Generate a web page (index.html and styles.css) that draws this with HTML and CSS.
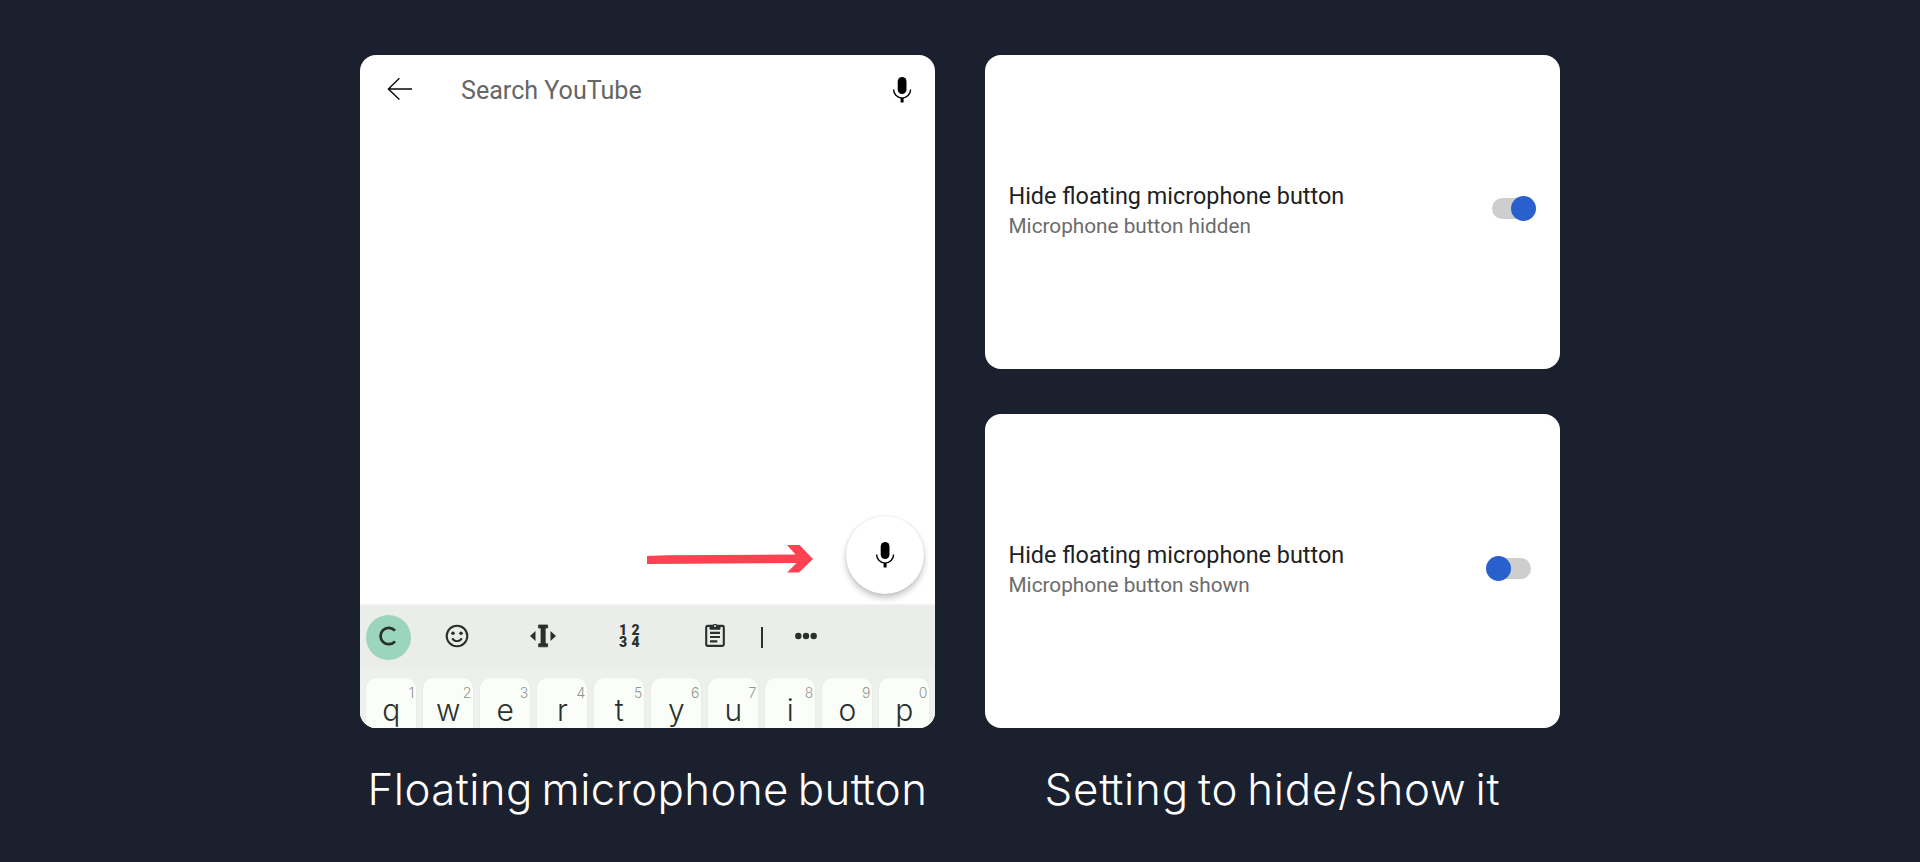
FILE: index.html
```html
<!DOCTYPE html>
<html lang="en">
<head>
<meta charset="utf-8">
<title>Hide floating microphone button</title>
<link rel="stylesheet" href="styles.css">
</head>
<body>
<svg class="defs" width="0" height="0">
  <symbol id="mic" viewBox="0 0 20 28">
    <rect x="5.7" y="1" width="8.8" height="17" rx="4.4" fill="#000"/>
    <path d="M1.6 13.6a8.5 8.5 0 0 0 17 0" fill="none" stroke="#000" stroke-width="1.4"/>
    <path d="M10.1 21.8v4.8" stroke="#000" stroke-width="3"/>
  </symbol>
</svg>
<main class="showcase">
  <section class="column">
    <div class="card phone">
      <header class="search">
        <svg class="back" viewBox="0 0 26 24"><path d="M12.4 1.2 1.4 12l11 10.6M1.4 12H25" fill="none" stroke="#0a0a0a" stroke-width="1.4"/></svg>
        <span class="query">Search YouTube</span>
        <svg class="mic"><use href="#mic"/></svg>
      </header>
      <div class="results">
        <svg class="arrow" viewBox="0 0 166 28"><path d="M0 11 20 10.2 148.5 9.6 140 0H152.500L166 14 152 27.500H140L149.500 18 0 18.900Z" fill="#ff4151"/></svg>
        <div class="fab"><svg class="mic"><use href="#mic"/></svg></div>
      </div>
      <div class="keyboard">
        <div class="tools">
          <div class="avatar"><svg viewBox="0 0 18 20"><path d="M16 4.700A8.200 8.200 0 1 0 16 15.300" fill="none" stroke="#29312d" stroke-width="2.700"/></svg></div>
          <svg class="emoji" viewBox="0 0 24 24" fill="none" stroke="#29312d"><circle cx="12" cy="12" r="10.300" stroke-width="2.100"/><circle cx="8" cy="9.300" r="1.800" fill="#29312d" stroke="none"/><circle cx="16" cy="9.300" r="1.800" fill="#29312d" stroke="none"/><path d="M7.200 14.200c2 3.900 7.600 3.900 9.600 0" stroke-width="1.900"/></svg>
          <svg class="cursor" viewBox="0 0 26 24" fill="#29312d"><path d="M5.500 7v10L0 12zM20.500 7v10L26 12z" /><path d="M8.600 1h9v3h-2.400v15.800h2.400v3h-9v-3H11V4H8.600z" stroke="#29312d" stroke-width=".8" stroke-linejoin="round"/></svg>
          <div class="numbers"><span>1</span><span>2</span><span>3</span><span>4</span></div>
          <svg class="clipboard" viewBox="0 0 20 24" fill="none" stroke="#29312d"><rect x="1.200" y="2.900" width="17.600" height="20" rx="1.400" stroke-width="2.100"/><path d="M5 3.200h2.500a2.600 2.600 0 0 1 5 0H15v3H5z" fill="#29312d" stroke-width="1"/><circle cx="10" cy="2.900" r="1" fill="#ecedeb" stroke="none"/><path d="M5 9.800h10M5 14h10M5 18.300h7.300" stroke-width="2.200"/></svg>
          <span class="divider"></span>
          <svg class="more" viewBox="0 0 22 8" fill="#29312d"><circle cx="3.300" cy="4" r="3.200"/><circle cx="11" cy="4" r="3.200"/><circle cx="18.700" cy="4" r="3.200"/></svg>
        </div>
        <div class="keys">
          <div class="key">q<sup>1</sup></div><div class="key">w<sup>2</sup></div><div class="key">e<sup>3</sup></div><div class="key">r<sup>4</sup></div><div class="key">t<sup>5</sup></div><div class="key">y<sup>6</sup></div><div class="key">u<sup>7</sup></div><div class="key">i<sup>8</sup></div><div class="key">o<sup>9</sup></div><div class="key">p<sup>0</sup></div>
        </div>
      </div>
    </div>
    <h2 class="caption"><span class="floating">Floating microphone bu<span class="joined">t</span>ton</span></h2>
  </section>
  <section class="column">
    <div class="settings">
      <div class="card setting">
        <div class="label"><span class="title">Hide floating microphone button</span><span class="summary">Microphone button hidden</span></div>
        <div class="switch on"><span class="thumb"></span></div>
      </div>
      <div class="card setting">
        <div class="label"><span class="title">Hide floating microphone button</span><span class="summary">Microphone button shown</span></div>
        <div class="switch"><span class="thumb"></span></div>
      </div>
    </div>
    <h2 class="caption"><span class="hideshow">Se<span class="joined">t</span>ting to hide/show it</span></h2>
  </section>
</main>
</body>
</html>
```
FILE: styles.css
```css
* { box-sizing: border-box; }
body { margin: 0; background: #1b202e; font-family: Roboto, sans-serif; }
svg { display: block; flex: none; }
.defs { position: absolute; }
.showcase { height: 862px; padding-top: 54.600px; display: flex; justify-content: center; gap: 50px; overflow: hidden; }
.column { width: 575px; }
.card { background: #fff; border-radius: 16px; overflow: hidden; }
.phone { height: 673.700px; display: flex; flex-direction: column; }

.search { height: 70px; display: flex; align-items: center; padding: 0 23px 0 27px; }
.back { width: 26px; height: 24px; margin-top: -2px; }
.query { flex: 1; margin: 1px 0 0 48px; font-size: 25.100px; color: #666; }
.mic { width: 20px; height: 28px; }

.results { flex: 1; display: flex; justify-content: flex-end; align-items: flex-end; padding: 0 11px 10.500px 0; }
.arrow { width: 166px; height: 28px; margin: 0 33px 21px 0; }
.fab { width: 78px; height: 78px; border-radius: 50%; background: #fff; display: flex; align-items: center; justify-content: center; box-shadow: 0 4px 6px rgba(0,0,0,.23), 0 0 2px rgba(0,0,0,.12); }

.keyboard { height: 123.300px; background: #eef0ed; box-shadow: 0 0 2px #d9dbd9; }
.tools { height: 64px; background: #ebedea; display: flex; align-items: center; padding: 1px 0 0 6px; }
.avatar { width: 45px; height: 45px; border-radius: 50%; background: #9bd5bd; display: flex; align-items: center; justify-content: center; }
.avatar svg { width: 18px; height: 20px; margin: -2px 2px 0 0; }
.emoji { width: 24px; height: 24px; margin: -2px 0 0 33.500px; }
.cursor { width: 26px; height: 24px; margin: -2px 0 0 61px; }
.numbers { display: grid; grid-template-columns: 12.500px 8px; margin: -2px 0 0 63.500px; font: 900 14px/12.500px Roboto, sans-serif; color: #29312d; }
.clipboard { width: 20px; height: 24px; margin: -4px 0 0 65px; }
.divider { width: 2px; height: 21px; margin-left: 36px; background: #29312d; }
.more { width: 22px; height: 8px; margin: -2px 0 0 32px; }
.keys { display: flex; gap: 7px; padding-left: 6.300px; }
.key { position: relative; flex: none; width: 50px; height: 60px; border-radius: 10px 10px 0 0; background: #fbfdf9; text-align: center; font: 300 30px/58px Inter, sans-serif; color: #29312d; box-shadow: 0 0 2px rgba(0,0,0,.06); padding-top: 3px; margin-top: 9px; }
.key sup { position: absolute; top: 7px; right: 2px; font: 300 14px/16px Inter, sans-serif; color: #929592; }

.settings { display: flex; flex-direction: column; gap: 45px; }
.setting { height: 314.350px; display: flex; align-items: center; justify-content: space-between; padding: 0 24px 6px 23.500px; }
.label { display: flex; flex-direction: column; padding-top: 5px; }
.title { font-size: 23.400px; line-height: 29px; color: #202122; }
.summary { font-size: 20.750px; line-height: 30px; color: #6b6b6b; }
.switch { position: relative; width: 39px; height: 21px; margin-right: 5px; border-radius: 11px; background: #cecece; }
.thumb { position: absolute; top: -2px; left: -6px; width: 25px; height: 25px; border-radius: 50%; background: #2960cd; }
.switch.on { margin-right: 5.500px; }
.switch.on .thumb { left: 19.500px; }

.caption { margin: 29.500px 0 0; text-align: center; white-space: nowrap; font: 350 43.800px/64px Inter, sans-serif; color: #fff; }
.floating { letter-spacing: .420px; word-spacing: -4px; }
.hideshow { letter-spacing: .780px; word-spacing: -4px; }
.joined { letter-spacing: -2px; }
```
